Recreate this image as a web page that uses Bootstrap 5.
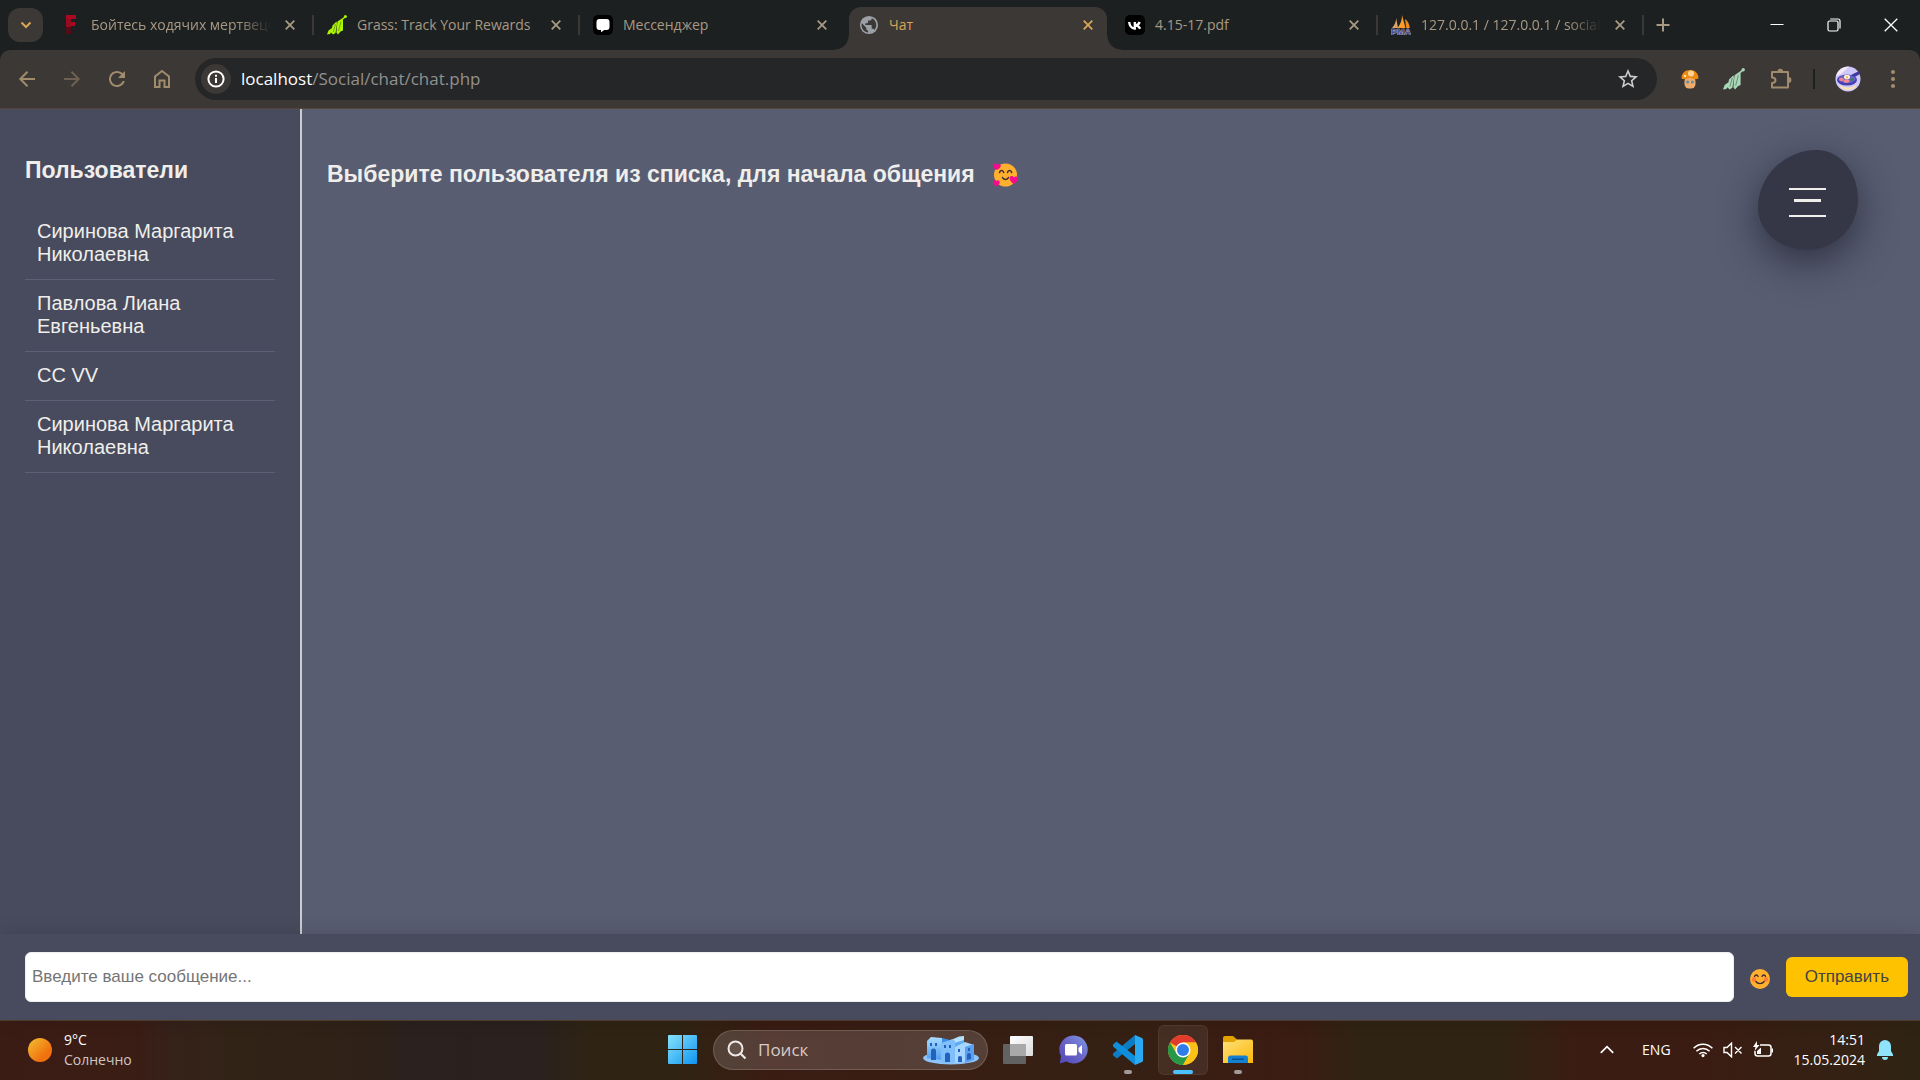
<!DOCTYPE html>
<html lang="ru">
<head>
<meta charset="utf-8">
<meta name="viewport" content="width=device-width, initial-scale=1">
<title>Чат</title>
<link rel="stylesheet" href="https://cdn.jsdelivr.net/npm/bootstrap@5.3.0/dist/css/bootstrap.min.css">
<style>
  :root {
    --strip: #1d2021;
    --chrome: #3c3836;
    --muted: #a89984;
    --accent: #d8a657;
    --panel: #474b5d;
    --chat: #585d72;
    --ink: #f0eeea;
  }
  body { font-family: "Open Sans", "Noto Sans", sans-serif; background: var(--strip); }
  .plain { background: none; border: 0; padding: 0; color: inherit; }
  svg { display: block; flex: none; }

  /* tab strip */
  .tab-strip { height: 50px; padding-left: 8px; color: var(--muted); }
  .tab-search { width: 35px; height: 34px; border-radius: 12px; background: var(--chrome); color: var(--accent); margin-right: 4px; }
  .browser-tab { flex: 0 1 266px; min-width: 0; height: 43px; padding: 0 14px 7px 14px; margin-top: 7px; gap: 10px; position: relative; font-size: 14px; }
  .browser-tab .tab-title { flex: 1 1 0; overflow: hidden; white-space: nowrap; text-align: left; line-height: 24px; }
  .browser-tab .fade-out { -webkit-mask-image: linear-gradient(90deg, #000 80%, transparent 98%); mask-image: linear-gradient(90deg, #000 80%, transparent 98%); }
  .browser-tab .tab-close { margin-right: 4px; }
  .browser-tab.divided::after { content: ""; position: absolute; right: -1px; top: 8px; width: 2px; height: 20px; background: var(--chrome); }
  .browser-tab.current { flex-basis: 258px; margin-left: 4px; margin-right: 4px; padding: 0 10px 7px 10px; background: var(--chrome); color: var(--accent); border-radius: 12px 12px 0 0; }
  .browser-tab.current::before, .browser-tab.current::after { content: ""; position: absolute; bottom: 0; width: 14px; height: 14px; }
  .browser-tab.current::before { left: -14px; background: radial-gradient(circle at 0 0, transparent 13px, var(--chrome) 14px); }
  .browser-tab.current::after { right: -14px; background: radial-gradient(circle at 100% 0, transparent 13px, var(--chrome) 14px); }
  .tab-add { margin-left: 13px; }
  .window-keys { gap: 43px; padding-right: 22px; color: #fff; }

  /* toolbar */
  .tool-row { height: 59px; padding: 0 15px; background: var(--chrome); border-bottom: 1px solid #544538; border-radius: 10px 10px 0 0; color: #a08b6c; }
  .nav-keys { gap: 21px; margin-right: 21px; }
  .address { height: 42px; border-radius: 21px; background: #242628; padding: 0 17px 0 6px; }
  .site-info { width: 30px; height: 30px; border-radius: 50%; background: var(--chrome); color: #fff; }
  .address-text { margin-left: 10px; font-size: 17px; line-height: 24px; color: #93918e; }
  .address-text b { font-weight: 400; color: #fff; }
  .ext-keys { gap: 20px; margin-left: 20px; }
  .ext-rule { width: 2px; height: 20px; background: var(--strip); }

  /* chat page */
  .chat-page { font-family: "Liberation Sans", Arial, sans-serif; background: var(--chat); color: var(--ink); min-height: 0; }
  .user-panel { width: 302px; flex: none; background: var(--panel); border-right: 2px solid #ccc; padding: 48px 25px 0; }
  .chat-heading { font-size: 23px; line-height: 27px; font-weight: 700; margin: 0; }
  .user-list { margin-top: 24px; --bs-list-group-bg: transparent; --bs-list-group-color: var(--ink); --bs-list-group-border-color: #5b6075; --bs-list-group-action-color: var(--ink); }
  .user-list.list-group-flush > .list-group-item { padding: 12px 12px 13px; font-size: 20px; line-height: 23px; border-width: 0 0 1px; }
  .chat-main { padding: 52px 25px 0; position: relative; }
  .menu-blob { position: absolute; right: 62px; top: 41px; width: 100px; height: 100px; gap: 9px; background: #353746; border: 0; border-radius: 59% 41% 51% 49% / 58% 49% 51% 42%; box-shadow: 0 12px 38px rgba(20, 22, 34, .62); padding: 5px 2px 0 0; }
  .menu-blob span { width: 37px; height: 2px; background: #f0eeea; }
  .menu-blob span:nth-child(2) { width: 27px; height: 3px; margin-bottom: 4px; }
  .send-bar { background: var(--panel); height: 86px; padding: 0 12px 0 25px; position: relative; box-shadow: 0 0 18px rgba(0, 0, 0, .14); font-family: "Liberation Sans", Arial, sans-serif; }
  .send-bar .form-control { height: 50px; border: 1px solid #eee; border-radius: 6px; padding: 0 6px; font-size: 17px; color: #333; background: #fff; }
  .send-bar .form-control::placeholder { color: #757575; opacity: 1; }
  .emoji-key { margin: 3px 16px 0; }
  .send-key { height: 40px; padding: 0 19px; border-radius: 6px; --bs-btn-bg: #ffc200; --bs-btn-color: #444; --bs-btn-font-size: 17px; --bs-btn-border-width: 0; line-height: 40px; }

  /* taskbar */
  .taskbar { height: 60px; padding-bottom: 2px; border-top: 1px solid #54402c; color: #fff; font-size: 14px; line-height: 20px;
    background: linear-gradient(90deg, #3b1c15 0, #3a1d15 7%, #35221a 9%, #322317 12%, #2f2117 19%, #2a2120 22%, #2b211e 28%, #2f2413 31%, #2f2413 35%, #3a1c13 40%, #381e13 50%, #352014 58%, #3b1c13 66%, #391d13 68%, #2f2413 71%, #2f2413 78%, #3a1c13 82%, #3a1c13 89%, #332213 97%, #2f2413 100%); }
  .weather { padding-left: 28px; gap: 12px; text-align: left; }
  .weather small, .weather span { display: block; font-size: 14px; }
  .weather small { color: #cfc6c3; }
  .dock { gap: 5px; }
  .dock-key { width: 50px; height: 50px; border-radius: 6px; position: relative; }
  .dock-key.front { background: rgba(255, 255, 255, .07); box-shadow: inset 0 0 0 1px rgba(255, 255, 255, .06); }
  .dock-key.running::after { content: ""; position: absolute; left: 21px; bottom: 1px; width: 8px; height: 4px; border-radius: 2px; background: #a39a97; }
  .dock-key.front::after { left: 15px; width: 20px; background: #4cc2ff; }
  .find-box { width: 275px; height: 40px; border-radius: 20px; border: 1px solid rgba(255, 255, 255, .16); background: rgba(255, 255, 255, .15); padding: 0 8px 0 13px; margin: 0 0 0 1px; }
  .find-box input { flex: 1 1 0; min-width: 0; margin-left: 9px; border: 0; outline: 0; background: none; color: #fff; font-size: 17px; }
  .find-box input::placeholder { color: #d6cbc7; opacity: 1; }
  .tray-icons { gap: 10px; margin: 0 21px 0 22px; }
  .bell-key { margin: 0 27px 0 12px; }
</style>
<script src="https://cdn.jsdelivr.net/npm/bootstrap@5.3.0/dist/js/bootstrap.bundle.min.js"></script>
</head>
<body class="vh-100 d-flex flex-column overflow-hidden">

<svg width="0" height="0" class="position-absolute" aria-hidden="true">
  <defs>
    <symbol id="i-close" viewBox="0 0 10 10"><path d="M.7.7l8.600 8.600M9.300.7L.7 9.300" stroke="currentColor" stroke-width="1.800" fill="none"/></symbol>
    <symbol id="i-grass" viewBox="0 0 20 20">
      <path d="M0 19.500L1.500 15.500 5 13V16L3 19zM4 17.500L5.500 10.500 9.500 6.500 10 9 8.500 18 6 19.500zM9.400 17.500L10.500 6.500 15 3.500 16 5V15.500L13.500 16.500 11 19.500z" fill="currentColor"/>
      <path d="M15 4.500L18 2" stroke="currentColor" stroke-width="1.400"/><circle cx="18.400" cy="1.600" r="1.500" fill="currentColor"/>
      <path d="M6.200 17L8.500 9M11.500 16L14 6.500" stroke="#2c3328" stroke-width=".7" opacity=".6"/>
    </symbol>
    <linearGradient id="g-win" x1="0" y1="0" x2="1" y2="1"><stop offset="0" stop-color="#86e3fb"/><stop offset="1" stop-color="#0e94f2"/></linearGradient>
    <linearGradient id="g-sun" x1="0" y1="0" x2="1" y2="1"><stop offset="0" stop-color="#f3c031"/><stop offset=".7" stop-color="#f0720f"/></linearGradient>
    <linearGradient id="g-view" x1="0" y1="0" x2="1" y2="1"><stop offset="0" stop-color="#fff"/><stop offset="1" stop-color="#dcdcdc"/></linearGradient>
    <linearGradient id="g-meet" x1="1" y1="0" x2="0" y2="1"><stop offset="0" stop-color="#7f9be6"/><stop offset=".5" stop-color="#6a64c6"/><stop offset="1" stop-color="#5248b8"/></linearGradient>
    <linearGradient id="g-dir" x1="0" y1="0" x2="1" y2="1"><stop offset="0" stop-color="#ffe07a"/><stop offset="1" stop-color="#fbb80b"/></linearGradient>
    <linearGradient id="g-town" x1="0" y1="0" x2="0" y2="1"><stop offset="0" stop-color="#a9dcff"/><stop offset="1" stop-color="#4f9df0"/></linearGradient>
  </defs>
</svg>

<!-- tab strip -->
<header class="tab-strip d-flex align-items-center flex-shrink-0">
  <button class="plain tab-search d-flex align-items-center justify-content-center flex-shrink-0" aria-label="Поиск вкладок">
    <svg width="12" height="8" viewBox="0 0 12 8"><path d="M1.500 1.500L6 6l4.500-4.500" fill="none" stroke="currentColor" stroke-width="2"/></svg>
  </button>
  <div class="browser-tab divided d-flex align-items-center">
    <svg width="20" height="20" viewBox="0 0 20 20"><g fill="#a80a22"><rect x="5" y="0" width="10" height="4"/><rect x="5" y="7" width="9" height="4"/></g><rect x="5" y="4" width="5" height="9" fill="#980a20"/><rect x="5" y="12" width="5" height="7" fill="#560c16"/></svg>
    <button class="plain tab-title fade-out">Бойтесь ходячих мертвецов</button>
    <button class="plain tab-close" aria-label="Закрыть"><svg width="10" height="10"><use href="#i-close"/></svg></button>
  </div>
  <div class="browser-tab divided d-flex align-items-center">
    <svg width="20" height="20" style="color:#abf600"><use href="#i-grass"/></svg>
    <button class="plain tab-title">Grass: Track Your Rewards</button>
    <button class="plain tab-close" aria-label="Закрыть"><svg width="10" height="10"><use href="#i-close"/></svg></button>
  </div>
  <div class="browser-tab d-flex align-items-center">
    <svg width="20" height="20" viewBox="0 0 20 20"><rect width="20" height="20" rx="5"/><path d="M6.500 4h7a3 3 0 013 3v5a3 3 0 01-3 3h-2.200L8 17.200V15H6.500a3 3 0 01-3-3V7a3 3 0 013-3z" fill="#fff"/></svg>
    <button class="plain tab-title">Мессенджер</button>
    <button class="plain tab-close" aria-label="Закрыть"><svg width="10" height="10"><use href="#i-close"/></svg></button>
  </div>
  <div class="browser-tab current d-flex align-items-center">
    <svg width="20" height="20" viewBox="1 1 22 22"><circle cx="12" cy="12" r="10" fill="#9aa0a6"/><path d="M4.200 10.200L9 15v1c0 1.100.9 2 2 2v2.300C7 20 3.800 16.500 3.800 12zM17.900 17.400c-.3-.8-1-1.400-1.900-1.400h-1v-3c0-.5-.5-1-1-1H8v-2h2c.5 0 1-.5 1-1V7h2c1.100 0 2-.9 2-2v-.4c2.900 1.200 5 4 5 7.400 0 2.100-.8 4-2.100 5.400z" fill="#3c3836"/></svg>
    <button class="plain tab-title">Чат</button>
    <button class="plain tab-close" aria-label="Закрыть"><svg width="10" height="10"><use href="#i-close"/></svg></button>
  </div>
  <div class="browser-tab divided d-flex align-items-center">
    <svg width="20" height="20" viewBox="0 0 20 20"><rect width="20" height="20" rx="5"/><path d="M4.200 7c.3 4 2.200 6.300 5.600 6.500V7M10 10.500c2.800-.2 4-1.500 4.700-3.500M10 10.300c3 .3 4.400 1.700 5.200 3.500" fill="none" stroke="#fff" stroke-width="2.300"/></svg>
    <button class="plain tab-title">4.15-17.pdf</button>
    <button class="plain tab-close" aria-label="Закрыть"><svg width="10" height="10"><use href="#i-close"/></svg></button>
  </div>
  <div class="browser-tab divided d-flex align-items-center">
    <svg width="20" height="20" viewBox="0 0 20 20"><path d="M1 13C4 10 5 6 5.200 3L7 13z" fill="#d9a36b"/><path d="M6.500 13C10 9 11 4 11 0l3.500 13z" fill="#f89c2a"/><path d="M14 4c3 2 4.500 5.500 4.800 9h-3.500z" fill="#f28a1c"/><text x="0" y="20" font-family="Liberation Sans, sans-serif" font-weight="700" font-size="9" fill="#4c4f93" stroke="#c9cadb" stroke-width=".7" paint-order="stroke">PMA</text></svg>
    <button class="plain tab-title fade-out">127.0.0.1 / 127.0.0.1 / social</button>
    <button class="plain tab-close" aria-label="Закрыть"><svg width="10" height="10"><use href="#i-close"/></svg></button>
  </div>
  <button class="plain tab-add" aria-label="Новая вкладка"><svg width="14" height="14" viewBox="0 0 14 14"><path d="M7 .5v13M.5 7h13" stroke="currentColor" stroke-width="2"/></svg></button>
  <div class="window-keys d-flex align-items-center ms-auto">
    <button class="plain" aria-label="Свернуть"><svg width="14" height="14" viewBox="0 0 14 14"><path d="M.5 6.500h13" stroke="currentColor"/></svg></button>
    <button class="plain" aria-label="Восстановить"><svg width="14" height="14" viewBox="0 0 14 14" fill="none" stroke="currentColor" stroke-width="1.200"><rect x="1" y="3" width="10" height="10" rx="1.500"/><path d="M3.200 1H11a2 2 0 012 2v7.500"/></svg></button>
    <button class="plain" aria-label="Закрыть окно"><svg width="14" height="14" viewBox="0 0 14 14"><path d="M.7.7l12.600 12.600M13.300.7L.7 13.300" stroke="currentColor" stroke-width="1.300"/></svg></button>
  </div>
</header>

<!-- toolbar -->
<nav class="tool-row d-flex align-items-center flex-shrink-0">
  <div class="nav-keys d-flex align-items-center">
    <button class="plain" aria-label="Назад"><svg width="24" height="24" viewBox="0 0 24 24"><path d="M20 12H5.500M12.500 4.800L5.300 12l7.200 7.200" fill="none" stroke="currentColor" stroke-width="2"/></svg></button>
    <button class="plain opacity-50" aria-label="Вперёд"><svg width="24" height="24" viewBox="0 0 24 24"><path d="M4 12h14.500M11.500 4.800l7.200 7.200-7.200 7.200" fill="none" stroke="currentColor" stroke-width="2"/></svg></button>
    <button class="plain" aria-label="Обновить"><svg width="24" height="24" viewBox="0 0 24 24" fill="currentColor"><path d="M17.650 6.350C16.200 4.900 14.210 4 12 4c-4.420 0-7.990 3.580-7.990 8s3.570 8 7.990 8c3.730 0 6.840-2.550 7.730-6h-2.080c-.82 2.330-3.040 4-5.650 4-3.310 0-6-2.690-6-6s2.690-6 6-6c1.660 0 3.140.69 4.220 1.780L13 11h7V4l-2.350 2.350z"/></svg></button>
    <button class="plain" aria-label="Домой"><svg width="24" height="24" viewBox="0 0 24 24"><path d="M5 20V9.500L12 4l7 5.500V20h-4.500v-6.500h-5V20z" fill="none" stroke="currentColor" stroke-width="2"/></svg></button>
  </div>
  <div class="address d-flex align-items-center flex-grow-1">
    <button class="plain site-info d-flex align-items-center justify-content-center" aria-label="Сведения о сайте"><svg width="18" height="18" viewBox="0 0 18 18"><circle cx="9" cy="9" r="7.600" fill="none" stroke="currentColor" stroke-width="2"/><path d="M9 8v5M9 4.800v2" stroke="currentColor" stroke-width="2"/></svg></button>
    <a href="#" class="address-text text-decoration-none"><b>localhost</b>/Social/chat/chat.php</a>
    <button class="plain ms-auto" aria-label="В закладки"><svg width="24" height="24" viewBox="0 0 24 24" fill="#cfcdcb"><path d="M22 9.240l-7.190-.62L12 2 9.190 8.630 2 9.240l5.460 4.730L5.820 21 12 17.270 18.180 21l-1.630-7.030L22 9.240zM12 15.400l-3.760 2.270 1-4.280-3.320-2.880 4.380-.38L12 6.100l1.710 4.040 4.380.38-3.320 2.880 1 4.280L12 15.400z"/></svg></button>
  </div>
  <div class="ext-keys d-flex align-items-center">
    <button class="plain" aria-label="Расширение"><svg width="26" height="20" viewBox="0 0 26 20"><rect x="7.500" y="8" width="11" height="11.500" rx="4.500" fill="#efab6c"/><path d="M4.500 9.500C4.500 4 8 1 13 1s8.500 3 8.500 8.500c-4 2-5.500-.5-8.500-.5s-5 2.300-8.500.5z" fill="#ee8a10"/><circle cx="14" cy="4.500" r="3" fill="#ffd694"/><circle cx="8" cy="7" r="1.300" fill="#ffe0ad"/><circle cx="10.600" cy="13" r="1.500" fill="#5f8ea8"/><circle cx="15.400" cy="13" r="1.500" fill="#5f8ea8"/></svg></button>
    <button class="plain" aria-label="Grass"><svg width="22" height="22" viewBox="0 0 20 20" style="color:#a9d8b8"><use href="#i-grass" width="20" height="20"/></svg></button>
    <button class="plain ms-1" aria-label="Расширения"><svg width="24" height="24" viewBox="0 0 24 24"><path d="M3 5h16V20.500H3v-4.500c3 0 3.500-1 3.500-2.700S6 10.500 3 10.500z" fill="none" stroke="currentColor" stroke-width="2" stroke-linejoin="round"/><path d="M8.500 4.500a2.800 2.800 0 015.600 0zM19.500 10a2.900 2.900 0 010 5.800z" fill="currentColor"/></svg></button>
    <span class="ext-rule"></span>
    <button class="plain" aria-label="Профиль"><svg width="26" height="26" viewBox="0 0 26 26"><circle cx="13" cy="13" r="12.500" fill="#cfc8fb"/><path d="M1 10C3 4 8 .6 14 .6L6 8z" fill="#f6e9f6"/><path d="M4 18c4 4.500 14 4.500 18 0l-2 4c-4 2.500-10 2.500-14 0z" fill="#f7e3b2"/><path d="M16 9l8-4 1 3-7 4z" fill="#3e3aa0"/><ellipse cx="12" cy="14" rx="10" ry="5.500" fill="#4540b0"/><ellipse cx="12" cy="13" rx="8.500" ry="4" fill="#6b63cf"/><ellipse cx="6.500" cy="13.500" rx="2.400" ry="1.800" fill="#ee8292"/><ellipse cx="11.500" cy="15" rx="3" ry="1.800" fill="#f08a94"/><circle cx="17" cy="13.500" r="1.800" fill="#3d7a6a"/><ellipse cx="12" cy="11" rx="3" ry="2.200" fill="#fff3d0"/><circle cx="12" cy="11.200" r="1" fill="#f3a93a"/></svg></button>
    <button class="plain" aria-label="Меню"><svg width="24" height="24" viewBox="0 0 24 24" fill="currentColor"><circle cx="12" cy="5" r="2.100"/><circle cx="12" cy="12" r="2.100"/><circle cx="12" cy="19" r="2.100"/></svg></button>
  </div>
</nav>

<!-- chat -->
<div class="chat-page d-flex flex-grow-1">
  <aside class="user-panel">
    <h3 class="chat-heading">Пользователи</h3>
    <div class="user-list list-group list-group-flush">
      <a href="#" class="list-group-item list-group-item-action">Сиринова Маргарита Николаевна</a>
      <a href="#" class="list-group-item list-group-item-action">Павлова Лиана Евгеньевна</a>
      <a href="#" class="list-group-item list-group-item-action">CC VV</a>
      <a href="#" class="list-group-item list-group-item-action">Сиринова Маргарита Николаевна</a>
    </div>
  </aside>
  <main class="chat-main flex-grow-1">
    <h3 class="chat-heading d-flex align-items-center">Выберите пользователя из списка, для начала общения
      <svg class="ms-3" width="28" height="26" viewBox="0 0 28 26"><circle cx="14.500" cy="13" r="11.500" fill="#ffb02e"/><path d="M8.500 10.500c.5-2.600 3.600-2.600 4.200 0M16.500 10.500c.5-2.600 3.600-2.600 4.200 0M11.500 15.500c1 2.600 5 2.600 6 0" fill="none" stroke="#402a32" stroke-width="1.500" stroke-linecap="round"/><g fill="#f70a8d"><path d="M5.500 8C1 5.500 1.500 1.500 4 1.500c1.200 0 1.700.8 2 1.500.4-.7 1.200-1.200 2.300-1C11 2.500 10 6.500 5.500 8z"/><path d="M22.500 22c-4.500-3-5-7.500-2-8 1.300-.2 2 .6 2.500 1.400.6-.7 1.600-1.200 2.700-.7 2.500 1.200.8 5.500-3.200 7.300z"/><path d="M5 24.500c-4-3.300-3-6.500-1-6.500 1 0 1.500.6 1.700 1.200.4-.6 1-1 1.900-.8 2 .5 1.400 4.600-2.600 6.100z"/></g></svg>
    </h3>
    <button class="menu-blob d-flex flex-column align-items-center justify-content-center" aria-label="Меню"><span></span><span></span><span></span></button>
  </main>
</div>
<form class="send-bar d-flex align-items-center flex-shrink-0">
  <label class="visually-hidden" for="message">Сообщение</label>
  <input id="message" class="form-control flex-grow-1" type="text" placeholder="Введите ваше сообщение...">
  <button type="button" class="plain emoji-key" aria-label="Смайлики"><svg width="20" height="20" viewBox="0 0 20 20"><circle cx="10" cy="10" r="10" fill="#ffb02e"/><circle cx="4" cy="10.500" r="2.300" fill="#ff7a3c"/><circle cx="16" cy="10.500" r="2.300" fill="#ff7a3c"/><path d="M4.500 7.500c.6-2 3-2 3.600 0M12 7.500c.6-2 3-2 3.600 0M5.800 12.500c2 2.800 6.400 2.800 8.400 0" fill="none" stroke="#402a32" stroke-width="1.300" stroke-linecap="round"/></svg></button>
  <button type="button" class="btn btn-warning send-key">Отправить</button>
</form>

<!-- taskbar -->
<footer class="taskbar d-flex align-items-center flex-shrink-0">
  <div class="col">
    <button class="plain weather d-flex align-items-center">
      <svg width="24" height="24" viewBox="0 0 24 24"><circle cx="12" cy="12" r="12" fill="url(#g-sun)"/></svg>
      <span><span>9°C</span><small>Солнечно</small></span>
    </button>
  </div>
  <div class="dock d-flex align-items-center">
    <button class="plain dock-key d-flex align-items-center justify-content-center" aria-label="Пуск"><svg width="29" height="29" viewBox="0 0 29 29" fill="url(#g-win)"><path d="M1 0h13v14H0V1a1 1 0 011-1zM15 0h13a1 1 0 011 1v13H15zM0 15h14v14H1a1 1 0 01-1-1zM15 15h14v13a1 1 0 01-1 1H15z"/></svg></button>
    <div class="find-box d-flex align-items-center">
      <svg width="20" height="20" viewBox="0 0 20 20"><circle cx="8.500" cy="8.500" r="7" fill="#ffffff18" stroke="#eee9e6" stroke-width="2"/><path d="M13.500 13.500l5 5" stroke="#eee9e6" stroke-width="2.200"/></svg>
      <label class="visually-hidden" for="find">Поиск</label>
      <input id="find" type="text" placeholder="Поиск">
      <svg width="56" height="30" viewBox="0 0 56 30"><ellipse cx="28" cy="23" rx="28" ry="6.500" fill="#8cc4fb"/><path d="M28 5L41 1v20l-13 4z" fill="#5fabf3"/><path d="M28 5l8-3.500 5-.5v4l-13 4z" fill="#b6e0ff"/><path d="M4 6l4-4 11 1v22L4 23z" fill="url(#g-town)"/><path d="M19 3l12 3v18l-12 2z" fill="#3c8ee8"/><path d="M18 8l12-4 2 2v21l-14 1z" fill="#7fbffa"/><path d="M32 12l10-5 9 3v15l-19 3z" fill="#a6d5ff"/><path d="M42 12l9-3v16l-9 3z" fill="#5a9ff0"/><g fill="#2262bd"><path d="M8 25v-9a2.500 2.500 0 015 0v9zM22 27v-7a2.500 2.500 0 015 0v7zM35 27v-5a2.500 2.500 0 014 0v5zM44 25v-5a2 2 0 014 0v4z"/><path d="M7 8h2v3H7zM12 8h2v3h-2zM21 10h2v3h-2zM26 10h2v3h-2zM35 14h2v3h-2zM45 13h2v3h-2z"/></g></svg>
    </div>
    <button class="plain dock-key d-flex align-items-center justify-content-center" aria-label="Представление задач"><svg width="30" height="28" viewBox="0 0 30 28"><rect x="0" y="8" width="23" height="20" rx="1" fill="#626262"/><rect x="7" y="0" width="23" height="20" rx="1" fill="url(#g-view)"/><path d="M7 8h16v12H7z" fill="#a9a9a9"/></svg></button>
    <button class="plain dock-key d-flex align-items-center justify-content-center" aria-label="Видеочат"><svg width="29" height="29" viewBox="0 0 29 29"><path d="M15 .5a14 14 0 11-7.500 26L.8 28.500 2 21A14 14 0 0115 .5z" fill="url(#g-meet)"/><rect x="6" y="9" width="12" height="11.500" rx="1.500" fill="#fff"/><path d="M19.500 13l3.500-3v9.500l-3.500-3z" fill="#fff"/></svg></button>
    <button class="plain dock-key running d-flex align-items-center justify-content-center" aria-label="Visual Studio Code"><svg width="30" height="30" viewBox="0 0 30 30"><path d="M22 0v9L4 23.500 0 20.500v-2z" fill="#0c7cc4"/><path d="M0 9.500L3.500 6.500 22 21v9L0 11.500z" fill="#0f8fdb"/><path d="M22 0l7 3a2 2 0 011 1.600v20.800a2 2 0 01-1 1.600l-7 3z" fill="#2aa9f3"/></svg></button>
    <button class="plain dock-key running front d-flex align-items-center justify-content-center" aria-label="Google Chrome"><svg width="30" height="30" viewBox="0 0 30 30"><circle cx="15" cy="15" r="15" fill="#fbc116"/><path d="M15 15L2 7.500A15 15 0 0128 7.500H15z" fill="#e33b2e"/><path d="M2 7.500A15 15 0 0015 30l6.500-11.300L15 15l-6.500 3.700z" fill="#279847"/><path d="M28 7.500A15 15 0 0115 30l6.500-11.300a7.500 7.500 0 00-.5-8.200L15 7.500z" fill="#fbc116"/><circle cx="15" cy="15" r="7.500" fill="#fff"/><circle cx="15" cy="15" r="6" fill="#2f7de9"/></svg></button>
    <button class="plain dock-key running d-flex align-items-center justify-content-center" aria-label="Проводник"><svg width="30" height="28" viewBox="0 0 30 28"><path d="M0 2a2 2 0 012-2h8l4 3.500V8H0z" fill="#e2a100"/><path d="M0 6h11l3-2.500h14a2 2 0 012 2V27H0z" fill="url(#g-dir)"/><path d="M5 27v-5a2.500 2.500 0 012.500-2.500h15A2.500 2.500 0 0125 22v5z" fill="#1380d2"/><path d="M9 23.200h12" stroke="#0a4f93" stroke-width="1.500"/></svg></button>
  </div>
  <div class="col d-flex align-items-center justify-content-end">
    <button class="plain" aria-label="Скрытые значки"><svg width="14" height="9" viewBox="0 0 14 9"><path d="M.8 7.800L7 1.600l6.200 6.200" fill="none" stroke="#fff" stroke-width="1.700"/></svg></button>
    <button class="plain ms-4 ps-1">ENG</button>
    <div class="tray-icons d-flex align-items-center">
      <svg width="20" height="16" viewBox="0 0 20 16" fill="none" stroke="#fff" stroke-width="1.500"><path d="M.6 6.300a13 13 0 0118.800 0M3.400 9.200a9.300 9.300 0 0113.200 0M6.300 12a5.300 5.300 0 017.400 0"/><circle cx="10" cy="13.600" r="1.600" fill="#fff" stroke="none"/></svg>
      <svg width="20" height="16" viewBox="0 0 20 16" fill="none" stroke="#fff" stroke-width="1.400"><path d="M1 5.500h3L8.500 1.200v13.600L4 10.500H1zM12 5l6.500 6.500M18.500 5L12 11.500"/></svg>
      <svg width="20" height="18" viewBox="0 0 20 18"><path d="M7 4h8.500A2.500 2.500 0 0118 6.500v6a2.500 2.500 0 01-2.500 2.500h-11A2.500 2.500 0 012 12.500V10" fill="none" stroke="#fff" stroke-width="1.500"/><path d="M18.500 7.500h1.500v4h-1.500zM4 13V10L8 6.500V13zM4 0L0 6h2.500L1.500 10 6.500 4H4z" fill="#fff"/></svg>
    </div>
    <button class="plain text-end">14:51<br>15.05.2024</button>
    <button class="plain bell-key" aria-label="Уведомления"><svg width="16" height="20" viewBox="0 0 16 20" fill="#8fe3fb"><path d="M8 0a6 6 0 016 6v5l2 3.500V16H0v-1.500L2 11V6a6 6 0 016-6zM5 17h6a3 3 0 01-6 0z"/></svg></button>
  </div>
</footer>
</body>
</html>
